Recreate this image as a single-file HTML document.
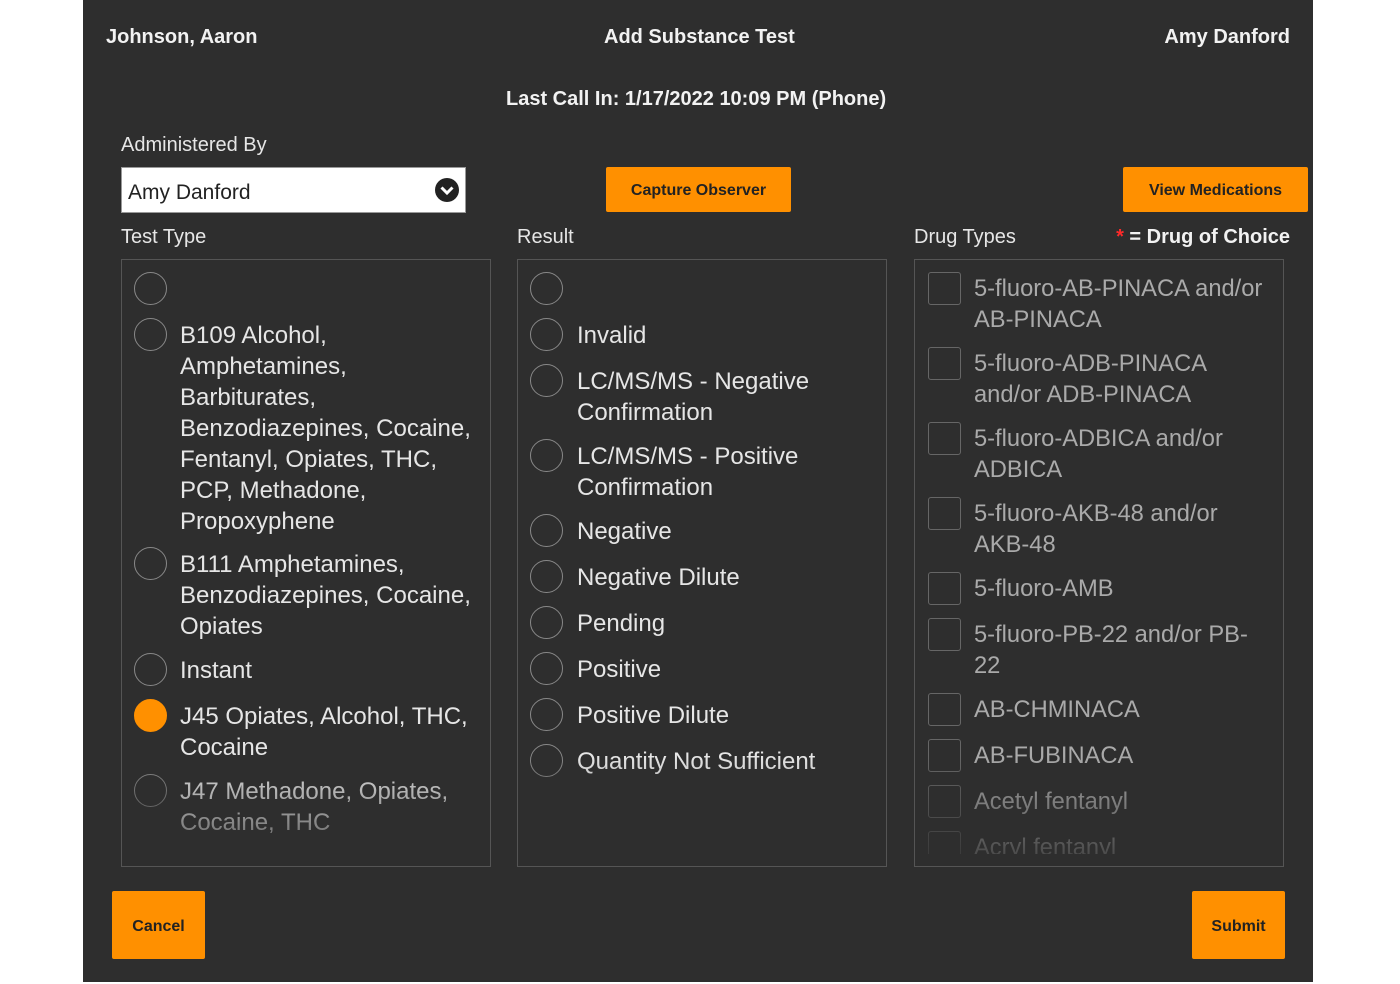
<!DOCTYPE html>
<html><head><meta charset="utf-8"><style>
*{margin:0;padding:0;box-sizing:border-box}
body{width:1400px;height:984px;background:#fff;font-family:"Liberation Sans",sans-serif;position:relative;overflow:hidden}
#p{position:absolute;left:83px;top:0;width:1230px;height:982px;background:#2e2e2e;color:#e6e6e6}
.a{position:absolute;white-space:nowrap}
.h{font-weight:bold;font-size:20px;color:#f2f2f2}
.lbl{font-size:20px;color:#e6e6e6}
.btn{position:absolute;background:#ff9000;color:#222;font-weight:bold;font-size:16px;display:flex;align-items:center;justify-content:center;border-radius:2px;padding-top:3px}
.box{position:absolute;top:259px;width:370px;height:608px;border:1px solid #555;overflow:hidden}
.box::after{content:"";position:absolute;left:0;right:0;bottom:0;height:110px;background:linear-gradient(rgba(46,46,46,0),rgba(46,46,46,.85))}
.it{position:absolute;font-size:24px;line-height:31px;color:#e6e6e6;white-space:nowrap;padding-top:2px}
.r{position:absolute;width:33px;height:33px;border:1.5px solid #888;border-radius:50%}
.c{position:absolute;width:33px;height:33px;border:1.5px solid #666;border-radius:3px}
.dt{color:#aaa;font-size:23.7px}
.clip{position:absolute;left:0;top:0;width:100%;height:594px;overflow:hidden}
</style></head><body><div id="p">
<div class="a h" style="left:23px;top:26px">Johnson, Aaron</div>
<div class="a h" style="left:521px;top:26px">Add Substance Test</div>
<div class="a h" style="right:23px;top:26px">Amy Danford</div>
<div class="a h" style="left:423px;top:88px">Last Call In: 1/17/2022 10:09 PM (Phone)</div>
<div class="a lbl" style="left:38px;top:134px">Administered By</div>
<div class="a" style="left:38px;top:167px;width:345px;height:46px;background:#fff;border:1px solid #999">
<span class="a" style="left:6px;top:13px;font-size:21px;color:#222">Amy Danford</span>
<svg class="a" style="left:313px;top:10px" width="24" height="24" viewBox="0 0 24 24"><circle cx="12" cy="12" r="12" fill="#222"/><path d="M6.5 9.5l5.5 5.5 5.5-5.5" stroke="#fff" stroke-width="3" fill="none"/></svg></div>
<div class="btn" style="left:523px;top:167px;width:185px;height:45px">Capture Observer</div>
<div class="btn" style="left:1040px;top:167px;width:185px;height:45px">View Medications</div>
<div class="a lbl" style="left:38px;top:226px">Test Type</div>
<div class="a lbl" style="left:434px;top:226px">Result</div>
<div class="a lbl" style="left:831px;top:226px">Drug Types</div>
<div class="a h" style="right:23px;top:226px"><span style="color:#ff2a2a">*</span> = Drug of Choice</div>

<div class="box" style="left:38px">
<div class="r" style="left:12px;top:12px"></div>
<div class="r" style="left:12px;top:58px"></div><div class="it" style="left:58px;top:58px">B109 Alcohol,<br>Amphetamines,<br>Barbiturates,<br>Benzodiazepines, Cocaine,<br>Fentanyl, Opiates, THC,<br>PCP, Methadone,<br>Propoxyphene</div>
<div class="r" style="left:12px;top:287px"></div><div class="it" style="left:58px;top:287px">B111 Amphetamines,<br>Benzodiazepines, Cocaine,<br>Opiates</div>
<div class="r" style="left:12px;top:393px"></div><div class="it" style="left:58px;top:393px">Instant</div>
<div class="r" style="left:12px;top:439px;background:#ff9000;border-color:#ff9000"></div><div class="it" style="left:58px;top:439px">J45 Opiates, Alcohol, THC,<br>Cocaine</div>
<div class="r" style="left:12px;top:514px"></div><div class="it" style="left:58px;top:514px">J47 Methadone, Opiates,<br>Cocaine, THC</div>
</div>

<div class="box" style="left:434px">
<div class="r" style="left:12px;top:12px"></div>
<div class="r" style="left:12px;top:58px"></div><div class="it" style="left:59px;top:58px">Invalid</div>
<div class="r" style="left:12px;top:104px"></div><div class="it" style="left:59px;top:104px">LC/MS/MS - Negative<br>Confirmation</div>
<div class="r" style="left:12px;top:179px"></div><div class="it" style="left:59px;top:179px">LC/MS/MS - Positive<br>Confirmation</div>
<div class="r" style="left:12px;top:254px"></div><div class="it" style="left:59px;top:254px">Negative</div>
<div class="r" style="left:12px;top:300px"></div><div class="it" style="left:59px;top:300px">Negative Dilute</div>
<div class="r" style="left:12px;top:346px"></div><div class="it" style="left:59px;top:346px">Pending</div>
<div class="r" style="left:12px;top:392px"></div><div class="it" style="left:59px;top:392px">Positive</div>
<div class="r" style="left:12px;top:438px"></div><div class="it" style="left:59px;top:438px">Positive Dilute</div>
<div class="r" style="left:12px;top:484px"></div><div class="it" style="left:59px;top:484px">Quantity Not Sufficient</div>
</div>

<div class="box" style="left:831px"><div class="clip">
<div class="c" style="left:13px;top:12px"></div><div class="it dt" style="left:59px;top:12px">5-fluoro-AB-PINACA and/or<br>AB-PINACA</div>
<div class="c" style="left:13px;top:87px"></div><div class="it dt" style="left:59px;top:87px">5-fluoro-ADB-PINACA<br>and/or ADB-PINACA</div>
<div class="c" style="left:13px;top:162px"></div><div class="it dt" style="left:59px;top:162px">5-fluoro-ADBICA and/or<br>ADBICA</div>
<div class="c" style="left:13px;top:237px"></div><div class="it dt" style="left:59px;top:237px">5-fluoro-AKB-48 and/or<br>AKB-48</div>
<div class="c" style="left:13px;top:312px"></div><div class="it dt" style="left:59px;top:312px">5-fluoro-AMB</div>
<div class="c" style="left:13px;top:358px"></div><div class="it dt" style="left:59px;top:358px">5-fluoro-PB-22 and/or PB-<br>22</div>
<div class="c" style="left:13px;top:433px"></div><div class="it dt" style="left:59px;top:433px">AB-CHMINACA</div>
<div class="c" style="left:13px;top:479px"></div><div class="it dt" style="left:59px;top:479px">AB-FUBINACA</div>
<div class="c" style="left:13px;top:525px"></div><div class="it dt" style="left:59px;top:525px">Acetyl fentanyl</div>
<div class="c" style="left:13px;top:571px"></div><div class="it dt" style="left:59px;top:571px">Acryl fentanyl</div>
</div></div>

<div class="btn" style="left:29px;top:891px;width:93px;height:68px">Cancel</div>
<div class="btn" style="left:1109px;top:891px;width:93px;height:68px">Submit</div>
</div></body></html>
